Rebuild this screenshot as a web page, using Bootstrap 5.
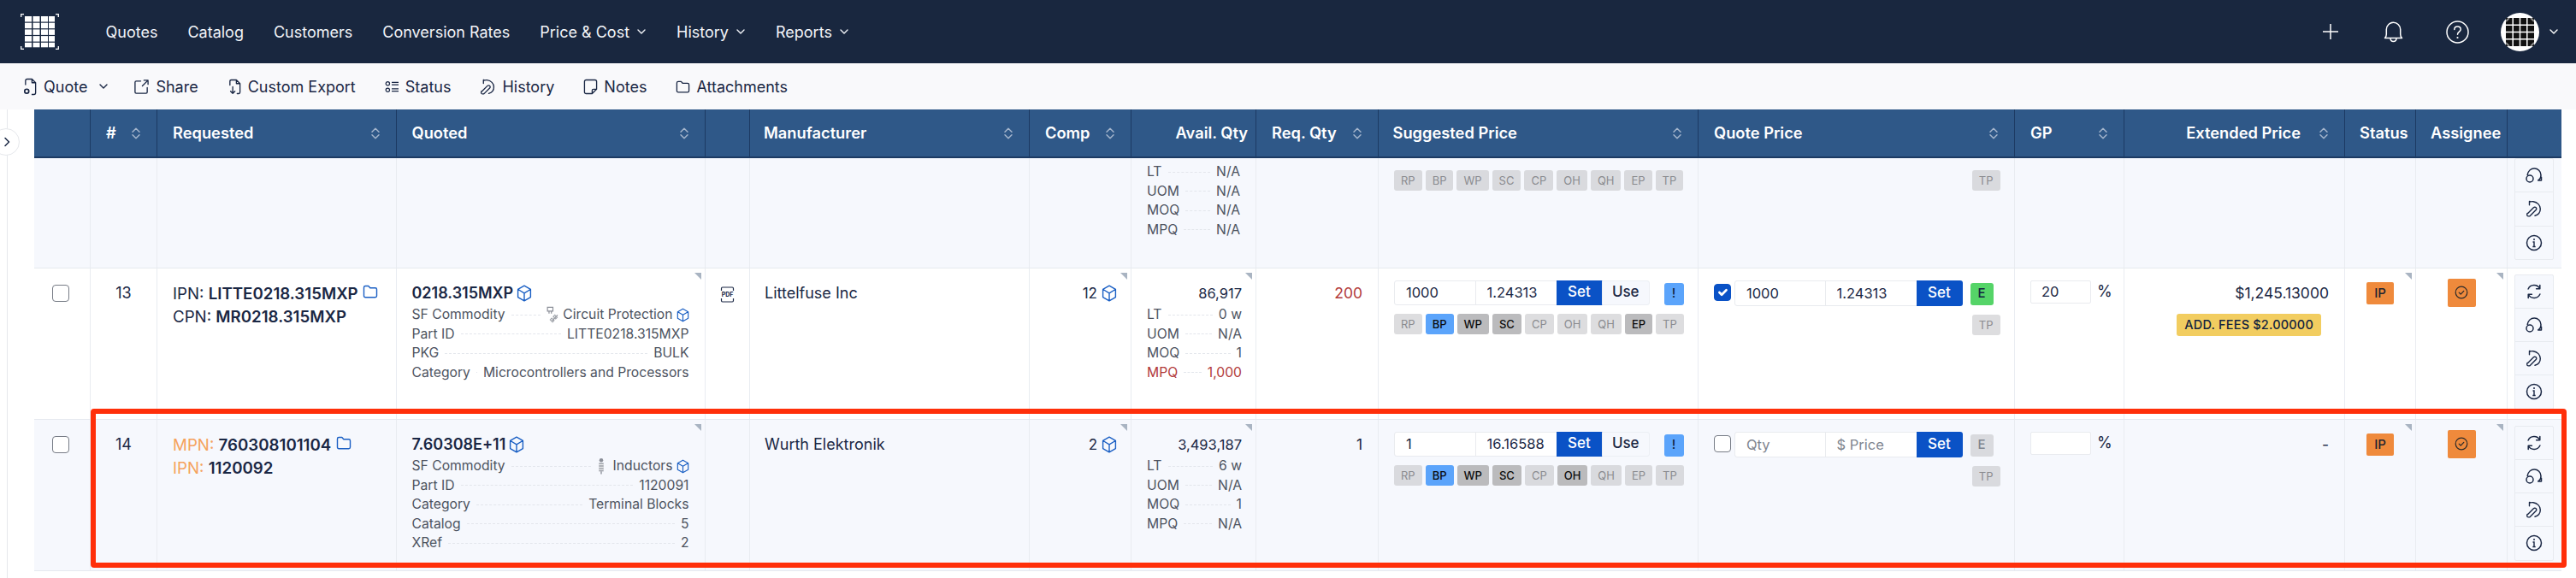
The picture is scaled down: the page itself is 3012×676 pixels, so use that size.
<!DOCTYPE html>
<html lang="en">
<head>
    <meta charset="UTF-8">
    <meta name="viewport" content="width=device-width, initial-scale=1.0">
    <title>Quote</title>

    <!-- Bootstrap CSS -->
    <link rel="stylesheet" href="https://cdn.jsdelivr.net/npm/bootstrap@5.3.0/dist/css/bootstrap.min.css">

    <style>
        body {
            font-family: Inter, "Liberation Sans", sans-serif;
            font-size: 18px;
            color: #1a2744;
            background-color: #fff;
            overflow: hidden;
        }

        /* top bar */
        .top-bar {
            height: 74px;
            background-color: #19273f;
            padding: 0;
        }
        .brand-mark { margin-left: 24px; margin-right: 37px; display: block; }
        .navbar-expand.top-bar .navbar-nav .nav-link {
            color: #f2f4f8;
            font-size: 18px;
            padding: 0 17.5px;
            display: flex;
            align-items: center;
            gap: 8px;
        }
        .top-tools { margin-right: 20px; }
        .top-tool { color: #fff; display: block; }
        .tool-plus { margin-right: 53px; }
        .tool-bell { margin-right: 50px; }
        .tool-help { margin-right: 37px; }
        .user-pic {
            width: 45px;
            height: 45px;
            border-radius: 50%;
            background-color: #fff;
            display: flex;
            align-items: center;
            justify-content: center;
            margin-right: 11px;
        }

        /* action strip */
        .action-strip {
            height: 54px;
            background-color: #f9f9fb;
            padding-left: 27px;
            gap: 34px;
        }
        .strip-item {
            display: flex;
            align-items: center;
            gap: 7px;
            color: #1a2744;
            font-size: 18px;
            text-decoration: none;
        }
        .strip-caret { margin-left: 6px; margin-right: -5px; }

        /* page body */
        .page-body { position: relative; }
        .side-rail {
            flex: 0 0 9px;
            border-right: 1px solid #e6e8ec;
            height: 548px;
        }
        .rail-toggle {
            position: absolute;
            left: -9px;
            top: 22px;
            width: 32px;
            height: 32px;
            border-radius: 50%;
            border: 1px solid #e6e8ec;
            background-color: #fff;
            display: flex;
            align-items: center;
            justify-content: flex-end;
            padding: 0 10px 0 0;
        }
        .grid-wrap { margin-left: 31px; width: 2954.5px; }

        /* quote table */
        .quote-grid {
            table-layout: fixed;
            width: 2954.5px;
            margin: 0;
            --bs-table-bg: transparent;
            --bs-table-color: #1a2744;
        }
        .quote-grid > thead > tr > th {
            height: 56px;
            padding: 0 18px;
            background-color: #2f5888;
            color: #fff;
            font-weight: 600;
            font-size: 18.3px;
            vertical-align: middle;
            border-bottom: 2px solid #1c3a63;
            border-right: 1px solid #1c3a63;
        }
        .quote-grid > thead > tr > th:last-child { border-right: 0; }
        .quote-grid > thead > tr > th.tight-end { padding-right: 9px; }
        .quote-grid > thead > tr > th.snug-cell { padding-left: 17px; padding-right: 9px; white-space: nowrap; }
        .quote-grid > thead > tr > th.sugg-head { padding-left: 16.5px; }
        .head-in {
            display: flex;
            align-items: center;
            justify-content: space-between;
            white-space: nowrap;
        }
        .head-in.ext-head { justify-content: flex-end; gap: 21px; }
        .sort-mark { color: #a4b5cc; display: block; flex: none; }

        .quote-grid > tbody > tr > td {
            position: relative;
            vertical-align: top;
            padding: 18px;
            border-bottom: 1px solid #e6e9ef;
            border-right: 1px solid #e9ecf1;
            line-height: 22.5px;
        }
        .quote-grid > tbody > tr > td:last-child { border-right: 0; }
        .tint-row > td { background-color: #f6f8fd; }
        .cut-row > td { height: 129px; }
        .full-row > td { height: 177px; }
        .quote-grid > tbody > tr.cut-row > td { padding-top: 5px; }
        .quote-grid > tbody > tr > td.btns-cell { padding: 7px 0 0; }
        .quote-grid > tbody > tr.cut-row > td.btns-cell { padding-top: 0; }
        .quote-grid > tbody > tr > td.pick-cell { padding: 19px 0 0 21px; }
        .quote-grid > tbody > tr > td.price-cell { padding: 14px 16.5px 0 18px; }
        .quote-grid > tbody > tr > td.gp-cell { padding: 14px 0 0 18px; }
        .quote-grid > tbody > tr > td.status-cell { padding: 16px 0 0; }
        .quote-grid > tbody > tr > td.owner-cell { padding: 12px 0 0; }
        .quote-grid > tbody > tr > td.pdf-cell { padding: 19px 0 0; text-align: center; }
        .quote-grid > tbody > tr > td.mfr-cell { padding-left: 17px; }

        .w-pick { width: 65.5px; }
        .w-num { width: 78px; }
        .w-req { width: 279.5px; }
        .w-quoted { width: 361px; }
        .w-pdf { width: 52.5px; }
        .w-mfr { width: 327px; }
        .w-comp { width: 119px; }
        .w-avail { width: 146px; }
        .w-reqqty { width: 143px; }
        .w-sugg { width: 374px; }
        .w-price { width: 370px; }
        .w-gp { width: 128px; }
        .w-ext { width: 258px; }
        .w-status { width: 83px; }
        .w-owner { width: 107px; }
        .w-btns { width: 63px; }

        .corner-tick {
            position: absolute;
            top: 5px;
            right: 4px;
            width: 0;
            height: 0;
            border-top: 8px solid #a9b4c2;
            border-left: 8px solid transparent;
        }

        .grid-check.form-check-input {
            width: 20px;
            height: 20px;
            margin: 0;
            border: 1px solid #777c86;
            border-radius: 4px;
        }
        .grid-check.form-check-input:checked {
            background-color: #0a52c6;
            border-color: #0a52c6;
        }
        .id-line { margin-bottom: 5px; white-space: nowrap; font-size: 18.7px; }
        .id-line b { font-weight: 600; }
        .mpn-tag { color: #f5a25d; }
        .part-head { font-weight: 600; margin-bottom: 3px; display: flex; align-items: center; gap: 4px; }
        .blue-ico { color: #1a5fc4; flex: none; }
        .spec-line {
            display: flex;
            align-items: center;
            font-size: 15.7px;
            color: #4d5360;
            white-space: nowrap;
        }
        .spec-line .leader {
            flex: 1 1 auto;
            border-bottom: 1px dashed #e3e6ec;
            margin: 0 7px;
        }
        .spec-warn { color: #b23a3a; }
        .spec-val { display: flex; align-items: center; gap: 4px; }
        .red-qty { color: #b23a3a; }
        .count-line { display: flex; justify-content: flex-end; align-items: center; gap: 5px; font-size: 17px; }
        .big-num { text-align: right; margin-bottom: 3px; font-size: 16.5px; }
        .money-line { font-size: 17.5px; }

        .price-in {
            height: 29px;
            padding: 0 13px;
            font-size: 16.5px;
            color: #1a2744;
            border: 1px solid #e9ebef;
            border-radius: 3px;
            background-color: #fff;
        }
        .price-in::placeholder { color: #80858f; }
        .input-group > .price-in.qty-sugg { flex: 0 0 95.5px; }
        .input-group > .price-in.val-sugg { flex: 0 0 96px; }
        .input-group > .price-in.qty-set { flex: 0 0 106.5px; height: 30px; }
        .input-group > .price-in.val-set { flex: 0 0 108px; height: 30px; }
        .set-go.btn {
            width: 54px;
            padding: 0;
            font-size: 17px;
            font-weight: 500;
            color: #fff;
            background-color: #0a52c6;
            border: 0;
            border-radius: 3px;
        }
        .use-go.btn {
            width: 56.5px;
            padding: 0;
            font-size: 17px;
            font-weight: 500;
            color: #1a2744;
            background-color: #f6f8fd;
            border: 1px solid #eceff4;
            border-radius: 3px;
        }
        .flag-box {
            margin-top: 3px;
            height: 26px;
            border-radius: 3px;
            display: flex;
            align-items: center;
            justify-content: center;
            font-size: 15px;
            font-weight: 500;
            flex: none;
        }
        .flag-warn { width: 23px; background-color: #5ba4fb; color: #12233f; }
        .flag-on { width: 27px; background-color: #55d468; color: #12233f; margin-left: 9px; }
        .flag-off { width: 27px; background-color: #d9dade; color: #80858f; margin-left: 9px; }

        .pill-row { display: flex; gap: 4px; margin-top: 10px; }
        .cut-row .pill-row { margin-top: 0; }
        .price-pill {
            height: 24px;
            padding: 0 8px;
            border-radius: 3px;
            font-size: 13px;
            line-height: 24px;
            background-color: #dddddf;
            color: #8a8b8f;
        }
        .tint-row .price-pill { background-color: #d9dade; }
        .price-pill.pill-on, .tint-row .price-pill.pill-on { background-color: #bbbbbd; color: #0c0c0c; font-weight: 500; }
        .price-pill.pill-blue { background-color: #5ba4fb; color: #0c0c0c; font-weight: 500; }
        .pill-end { justify-content: flex-end; }

        .gp-in {
            width: 71px;
            height: 27px;
            padding: 0 12px;
            font-size: 16.5px;
            color: #1a2744;
            border: 1px solid #e9ebef;
            border-radius: 2px;
        }
        .gp-box { display: flex; align-items: center; gap: 7px; }

        .fee-tag.badge {
            display: inline-block;
            margin: 13px 9px 0 0;
            height: 26px;
            padding: 0 9px;
            line-height: 26px;
            border-radius: 3px;
            font-size: 14.5px;
            font-weight: 500;
            letter-spacing: .2px;
            color: #12233f;
            background-color: #f2cd60;
        }
        .ip-box {
            width: 32px;
            height: 26px;
            margin: 0 auto;
            background-color: #ef8a3c;
            border-radius: 2px;
            font-size: 15px;
            font-weight: 500;
            line-height: 26px;
            text-align: center;
            color: #1f2430;
        }
        .owner-box {
            width: 33px;
            height: 33px;
            margin: 0 auto;
            background-color: #ef8a3c;
            border-radius: 2px;
            display: flex;
            align-items: center;
            justify-content: center;
            color: #2a2a2a;
        }

        .act-stack.btn-group-vertical { display: flex; width: 46px; margin: 0 auto; }
        .act-stack .btn {
            height: 40.25px;
            padding: 0;
            display: flex;
            align-items: center;
            justify-content: center;
            background-color: #f6f8fd;
            border: 1px solid #e8ebf0;
            border-radius: 2px;
            color: #1a2744;
        }

        /* the red marker over the last row */
        .row-marker {
            position: absolute;
            left: 106px;
            top: 350px;
            width: 2895px;
            height: 186px;
            border: 6px solid #ff2f0a;
            border-radius: 4px;
            pointer-events: none;
        }
    </style>
</head>
<body>
    <svg width="0" height="0" class="position-absolute">
        <defs>
            <symbol id="i-down" viewBox="0 0 12 12"><path d="M2 4l4 4 4-4" fill="none" stroke="currentColor" stroke-width="1.4" stroke-linecap="round" stroke-linejoin="round"/></symbol>
            <symbol id="i-sort" viewBox="0 0 12 14"><path d="M2 5.2l4-4 4 4M2 8.8l4 4 4-4" fill="none" stroke="currentColor" stroke-width="1.5" stroke-linecap="round" stroke-linejoin="round"/></symbol>
            <symbol id="i-cube" viewBox="0 0 18 20"><path d="M9 1.2l7.4 4.2v9.2L9 18.8l-7.4-4.2V5.4zM1.8 5.5L9 9.8l7.2-4.3M9 9.8v8.8" fill="none" stroke="currentColor" stroke-width="1.4" stroke-linejoin="round"/></symbol>
            <symbol id="i-folder" viewBox="0 0 18 18"><path d="M1.5 4.2c0-1 .7-1.7 1.7-1.7h3.6l2 2.2h6c1 0 1.7.7 1.7 1.7v7.6c0 1-.7 1.7-1.7 1.7H3.2c-1 0-1.7-.7-1.7-1.7z" fill="none" stroke="currentColor" stroke-width="1.4" stroke-linejoin="round"/></symbol>
            <symbol id="i-quote" viewBox="0 0 18 22"><path d="M3 9V3.5C3 2.400 3.800 1.500 5 1.500h6l4.500 4.500v12.500c0 1.200-.9 2-2 2h-3M11 1.500V6h4.500" fill="none" stroke="currentColor" stroke-width="1.400" stroke-linejoin="round"/><circle cx="4.500" cy="16.500" r="2.600" fill="none" stroke="currentColor" stroke-width="1.800"/></symbol>
            <symbol id="i-share" viewBox="0 0 20 20"><path d="M9 3H3.500C2.500 3 2 3.500 2 4.500v12c0 1 .5 1.500 1.500 1.500h12c1 0 1.500-.5 1.500-1.500V11M11 9l7-7M13 2h5v5" fill="none" stroke="currentColor" stroke-width="1.400" stroke-linecap="round" stroke-linejoin="round"/></symbol>
            <symbol id="i-export" viewBox="0 0 18 20"><path d="M3 8V3c0-1 .7-1.500 1.500-1.500H11L15.500 6v11c0 1-.6 1.500-1.500 1.500h-2M11 1.500V6h4.500M6.500 10v8M3.800 15.500l2.700 2.700 2.700-2.700" fill="none" stroke="currentColor" stroke-width="1.400" stroke-linecap="round" stroke-linejoin="round"/></symbol>
            <symbol id="i-status" viewBox="0 0 18 16"><circle cx="3.500" cy="4" r="2.300" fill="none" stroke="currentColor" stroke-width="1.300"/><circle cx="3.500" cy="12" r="2.300" fill="none" stroke="currentColor" stroke-width="1.300"/><path d="M8.500 2.500h8.500M8.500 5.500h8.500M8.500 10.500h8.500M8.500 13.500h8.500" stroke="currentColor" stroke-width="1.300"/></symbol>
            <symbol id="i-history" viewBox="0 0 20 20"><path d="M5 1.500h-.5v4.300M4.500 2.200C6 1.700 7.500 1.500 9 1.700c4.800.6 8.300 4.400 8.300 8.500 0 3.800-2.600 7-6.300 8M2.700 15.500l6.700-6.700c.8-.8 2-.8 2.800 0s.8 2 0 2.800l-6.700 6.700c-.8.500-2.800.7-3.500 0-.6-.7-.3-2 .0-2.800z" fill="none" stroke="currentColor" stroke-width="1.400" stroke-linecap="round" stroke-linejoin="round"/></symbol>
            <symbol id="i-note" viewBox="0 0 18 20"><path d="M11 18.500H3.500c-1.100 0-2-.9-2-2v-13c0-1.100.9-2 2-2h11c1.100 0 2 .9 2 2V13zM11 18.500V14.500c0-.9.6-1.500 1.500-1.500h4" fill="none" stroke="currentColor" stroke-width="1.400" stroke-linejoin="round"/></symbol>
            <symbol id="i-sync" viewBox="0 0 20 20"><path d="M16.600 6.500A7.500 7.500 0 0 0 3.100 7M3.400 13.500A7.500 7.500 0 0 0 16.900 13M16.800 2.500v4.200h-4.200M3.200 17.500v-4.200h4.200" fill="none" stroke="currentColor" stroke-width="1.500" stroke-linecap="round" stroke-linejoin="round"/></symbol>
            <symbol id="i-loop" viewBox="0 0 20 20"><circle cx="5" cy="14" r="4" fill="none" stroke="currentColor" stroke-width="1.500"/><path d="M2.200 9.500C3 5 6.300 2 10.200 2c4.300 0 7.800 3.400 7.800 7.700 0 2.700-1.300 4.900-3.300 6.100M18.500 12.300v3.800h-3.800" fill="none" stroke="currentColor" stroke-width="1.500" stroke-linecap="round" stroke-linejoin="round"/></symbol>
            <symbol id="i-info" viewBox="0 0 20 20"><circle cx="10" cy="10" r="8.500" fill="none" stroke="currentColor" stroke-width="1.500"/><path d="M8.500 9h1.500v5.500M8.300 14.500h3.400" fill="none" stroke="currentColor" stroke-width="1.400"/><circle cx="10" cy="6" r="1" fill="currentColor"/></symbol>
            <symbol id="i-done" viewBox="0 0 16 16"><circle cx="8" cy="8" r="6.800" fill="none" stroke="currentColor" stroke-width="1.200"/><path d="M5.200 8.200l2 2 3.600-3.800" fill="none" stroke="currentColor" stroke-width="1.200" stroke-linecap="round" stroke-linejoin="round"/></symbol>
            <symbol id="i-fuse" viewBox="0 0 16 22"><path d="M1 1.500h7v5H1zM3 6.500v3M6 6.500v3M7 19l7-7.500" fill="none" stroke="#8b8f98" stroke-width="1.300"/><path d="M6.500 15.500l3 3-2 2-3-3zM10.500 11.500l3 3-2 2-3-3z" fill="none" stroke="#a3a7ae" stroke-width="1.300"/></symbol>
            <symbol id="i-coil" viewBox="0 0 10 22"><circle cx="5" cy="3.500" r="2.500" fill="#8b8f98"/><path d="M2 7h6v11H2z" fill="#a3a7ae"/><path d="M2 9.500h6M2 12.500h6M2 15.500h6" stroke="#fff" stroke-width="1"/><path d="M5 18v3.500" stroke="#8b8f98" stroke-width="1.500"/></symbol>
        </defs>
    </svg>

    <!-- top bar -->
    <nav class="navbar navbar-expand navbar-dark top-bar">
        <div class="container-fluid p-0">
            <svg class="brand-mark" width="45" height="42" viewBox="0 0 45 42">
                <path d="M.7 4V.7H4M41 .7h3.300V4M.7 38v3.300H4M41 41.300h3.300V38" fill="none" stroke="#fff" stroke-width="1.300"/>
                <g fill="#fff">
                    <rect x="5" y="3" width="8" height="6.500"/><rect x="14.500" y="3" width="8" height="6.500"/><rect x="24" y="3" width="8" height="6.500"/><rect x="33" y="3" width="7" height="6.500"/>
                    <rect x="5" y="10.700" width="8" height="6.500"/><rect x="14.500" y="10.700" width="8" height="6.500"/><rect x="24" y="10.700" width="8" height="6.500"/><rect x="33" y="10.700" width="7" height="6.500"/>
                    <rect x="5" y="18.400" width="8" height="6.500"/><rect x="14.500" y="18.400" width="8" height="6.500"/><rect x="24" y="18.400" width="8" height="6.500"/><rect x="33" y="18.400" width="7" height="6.500"/>
                    <rect x="5" y="26.100" width="8" height="6.500"/><rect x="14.500" y="26.100" width="8" height="6.500"/><rect x="24" y="26.100" width="8" height="6.500"/><rect x="33" y="26.100" width="7" height="6.500"/>
                    <rect x="5" y="33.800" width="8" height="5.500"/><rect x="14.500" y="33.800" width="8" height="5.500"/><rect x="24" y="33.800" width="8" height="5.500"/><rect x="33" y="33.800" width="7" height="5.500"/>
                </g>
            </svg>
            <ul class="navbar-nav me-auto">
                <li class="nav-item"><a class="nav-link" href="#">Quotes</a></li>
                <li class="nav-item"><a class="nav-link" href="#">Catalog</a></li>
                <li class="nav-item"><a class="nav-link" href="#">Customers</a></li>
                <li class="nav-item"><a class="nav-link" href="#">Conversion Rates</a></li>
                <li class="nav-item"><a class="nav-link" href="#">Price &amp; Cost <svg width="12" height="12"><use href="#i-down"/></svg></a></li>
                <li class="nav-item"><a class="nav-link" href="#">History <svg width="12" height="12"><use href="#i-down"/></svg></a></li>
                <li class="nav-item"><a class="nav-link" href="#">Reports <svg width="12" height="12"><use href="#i-down"/></svg></a></li>
            </ul>
            <div class="d-flex align-items-center top-tools">
                <svg class="top-tool tool-plus" width="18" height="18" viewBox="0 0 18 18"><path d="M9 0v18M0 9h18" stroke="currentColor" stroke-width="1.500"/></svg>
                <svg class="top-tool tool-bell" width="23" height="26" viewBox="0 0 23 26"><path d="M1.500 20.500c1.300-1 1.800-2.500 1.800-4.500V10.500a8.200 8.200 0 0 1 16.400 0V16c0 2 .5 3.500 1.800 4.500zM8 20.800c0 2.200 1.500 3.700 3.500 3.700s3.500-1.500 3.500-3.700" fill="none" stroke="currentColor" stroke-width="1.500" stroke-linejoin="round"/></svg>
                <svg class="top-tool tool-help" width="27" height="27" viewBox="0 0 27 27"><circle cx="13.500" cy="13.500" r="12.500" fill="none" stroke="currentColor" stroke-width="1.500"/><path d="M9.800 10.500c0-2 1.600-3.500 3.700-3.500s3.700 1.400 3.700 3.300c0 2.800-3.700 2.900-3.700 6" fill="none" stroke="currentColor" stroke-width="1.500" stroke-linecap="round"/><circle cx="13.500" cy="20" r="1.100" fill="currentColor"/></svg>
                <div class="user-pic">
                    <svg width="33" height="33" viewBox="0 0 33 33">
                        <path d="M0 0h33v33H0z" fill="#111"/>
                        <path d="M8.200 0v33M16.500 0v33M24.800 0v33M0 8.200h33M0 16.500h33M0 24.800h33" stroke="#fff" stroke-width="1.500"/>
                        <path d="M0 4l4-4M29 0l4 4M0 29l4 4M33 29l-4 4" stroke="#8a8a8a" stroke-width="2"/>
                    </svg>
                </div>
                <svg class="top-tool" width="12" height="12"><use href="#i-down"/></svg>
            </div>
        </div>
    </nav>

    <!-- quote actions -->
    <div class="d-flex align-items-center action-strip">
        <a class="strip-item" href="#"><svg width="17" height="21"><use href="#i-quote"/></svg>Quote <svg class="strip-caret" width="12" height="12"><use href="#i-down"/></svg></a>
        <a class="strip-item" href="#"><svg width="19" height="19"><use href="#i-share"/></svg>Share</a>
        <a class="strip-item" href="#"><svg width="17" height="19"><use href="#i-export"/></svg>Custom Export</a>
        <a class="strip-item" href="#"><svg width="17" height="15"><use href="#i-status"/></svg>Status</a>
        <a class="strip-item" href="#"><svg width="19" height="19"><use href="#i-history"/></svg>History</a>
        <a class="strip-item" href="#"><svg width="17" height="19"><use href="#i-note"/></svg>Notes</a>
        <a class="strip-item" href="#"><svg width="17" height="17"><use href="#i-folder"/></svg>Attachments</a>
    </div>

    <div class="d-flex page-body">
        <div class="side-rail">
            <button class="rail-toggle" type="button" aria-label="Expand">
                <svg width="8" height="12" viewBox="0 0 8 12"><path d="M2 1.500L6.500 6 2 10.500" fill="none" stroke="#1a2744" stroke-width="1.500" stroke-linecap="round" stroke-linejoin="round"/></svg>
            </button>
        </div>

        <div class="grid-wrap">
            <table class="table quote-grid">
                <colgroup>
                    <col class="w-pick"><col class="w-num"><col class="w-req"><col class="w-quoted"><col class="w-pdf"><col class="w-mfr"><col class="w-comp"><col class="w-avail"><col class="w-reqqty"><col class="w-sugg"><col class="w-price"><col class="w-gp"><col class="w-ext"><col class="w-status"><col class="w-owner"><col class="w-btns">
                </colgroup>
                <thead>
                    <tr>
                        <th></th>
                        <th><div class="head-in">#<svg class="sort-mark" width="12" height="14"><use href="#i-sort"/></svg></div></th>
                        <th><div class="head-in">Requested<svg class="sort-mark" width="12" height="14"><use href="#i-sort"/></svg></div></th>
                        <th><div class="head-in">Quoted<svg class="sort-mark" width="12" height="14"><use href="#i-sort"/></svg></div></th>
                        <th></th>
                        <th class="ps-3"><div class="head-in">Manufacturer<svg class="sort-mark" width="12" height="14"><use href="#i-sort"/></svg></div></th>
                        <th><div class="head-in">Comp<svg class="sort-mark" width="12" height="14"><use href="#i-sort"/></svg></div></th>
                        <th class="text-end tight-end">Avail. Qty</th>
                        <th><div class="head-in">Req. Qty<svg class="sort-mark" width="12" height="14"><use href="#i-sort"/></svg></div></th>
                        <th class="sugg-head"><div class="head-in">Suggested Price<svg class="sort-mark" width="12" height="14"><use href="#i-sort"/></svg></div></th>
                        <th><div class="head-in">Quote Price<svg class="sort-mark" width="12" height="14"><use href="#i-sort"/></svg></div></th>
                        <th><div class="head-in">GP<svg class="sort-mark" width="12" height="14"><use href="#i-sort"/></svg></div></th>
                        <th><div class="head-in ext-head">Extended Price<svg class="sort-mark" width="12" height="14"><use href="#i-sort"/></svg></div></th>
                        <th class="snug-cell">Status</th>
                        <th class="snug-cell">Assignee</th>
                        <th></th>
                    </tr>
                </thead>
                <tbody>
                    <!-- row 12, scrolled mostly out of view -->
                    <tr class="tint-row cut-row">
                        <td></td><td></td><td></td><td></td><td></td><td></td><td></td>
                        <td>
                            <div class="spec-line mt-n1"><span>LT</span><span class="leader"></span><span>N/A</span></div>
                            <div class="spec-line"><span>UOM</span><span class="leader"></span><span>N/A</span></div>
                            <div class="spec-line"><span>MOQ</span><span class="leader"></span><span>N/A</span></div>
                            <div class="spec-line"><span>MPQ</span><span class="leader"></span><span>N/A</span></div>
                        </td>
                        <td></td>
                        <td class="price-cell">
                            <div class="pill-row">
                                <span class="price-pill">RP</span><span class="price-pill">BP</span><span class="price-pill">WP</span><span class="price-pill">SC</span><span class="price-pill">CP</span><span class="price-pill">OH</span><span class="price-pill">QH</span><span class="price-pill">EP</span><span class="price-pill">TP</span>
                            </div>
                        </td>
                        <td class="price-cell">
                            <div class="pill-row pill-end"><span class="price-pill">TP</span></div>
                        </td>
                        <td></td><td></td><td></td><td></td>
                        <td class="btns-cell">
                            <div class="btn-group-vertical act-stack">
                                <button class="btn" type="button"><svg width="20" height="20"><use href="#i-loop"/></svg></button>
                                <button class="btn" type="button"><svg width="20" height="20"><use href="#i-history"/></svg></button>
                                <button class="btn" type="button"><svg width="20" height="20"><use href="#i-info"/></svg></button>
                            </div>
                        </td>
                    </tr>

                    <!-- row 13 -->
                    <tr class="full-row">
                        <td class="pick-cell"><input class="form-check-input grid-check" type="checkbox"></td>
                        <td class="text-center">13</td>
                        <td>
                            <div class="id-line">IPN: <b>LITTE0218.315MXP</b> <svg class="blue-ico align-text-top" width="18" height="18"><use href="#i-folder"/></svg></div>
                            <div class="id-line">CPN: <b>MR0218.315MXP</b></div>
                        </td>
                        <td>
                            <span class="corner-tick"></span>
                            <div class="part-head">0218.315MXP <svg class="blue-ico" width="18" height="20"><use href="#i-cube"/></svg></div>
                            <div class="spec-line"><span>SF Commodity</span><span class="leader"></span><span class="spec-val"><svg width="15" height="20"><use href="#i-fuse"/></svg>Circuit Protection <svg class="blue-ico" width="15" height="17"><use href="#i-cube"/></svg></span></div>
                            <div class="spec-line"><span>Part ID</span><span class="leader"></span><span>LITTE0218.315MXP</span></div>
                            <div class="spec-line"><span>PKG</span><span class="leader"></span><span>BULK</span></div>
                            <div class="spec-line"><span>Category</span><span class="leader"></span><span>Microcontrollers and Processors</span></div>
                        </td>
                        <td class="pdf-cell">
                            <svg width="17" height="19" viewBox="0 0 17 19"><path d="M1.500 5V2.500c0-.8.500-1.500 1.300-1.500h11.400c.8 0 1.300.7 1.300 1.500V5M1.500 14v2.500c0 .8.500 1.500 1.300 1.500h11.400c.8 0 1.300-.7 1.300-1.500V14" fill="none" stroke="#1a2744" stroke-width="1.200"/><text x="8.500" y="12" text-anchor="middle" font-family="Inter, sans-serif" font-size="7" font-weight="700" fill="#1a2744">PDF</text></svg>
                        </td>
                        <td class="mfr-cell">Littelfuse Inc</td>
                        <td class="pe-3">
                            <span class="corner-tick"></span>
                            <div class="count-line">12 <svg class="blue-ico" width="18" height="20"><use href="#i-cube"/></svg></div>
                        </td>
                        <td class="pe-3">
                            <span class="corner-tick"></span>
                            <div class="big-num">86,917</div>
                            <div class="spec-line"><span>LT</span><span class="leader"></span><span>0 w</span></div>
                            <div class="spec-line"><span>UOM</span><span class="leader"></span><span>N/A</span></div>
                            <div class="spec-line"><span>MOQ</span><span class="leader"></span><span>1</span></div>
                            <div class="spec-line spec-warn"><span>MPQ</span><span class="leader"></span><span>1,000</span></div>
                        </td>
                        <td class="text-end red-qty money-line">200</td>
                        <td class="price-cell">
                            <div class="d-flex justify-content-between">
                                <div class="input-group flex-nowrap w-auto">
                                    <input class="form-control price-in qty-sugg" value="1000">
                                    <input class="form-control price-in val-sugg" value="1.24313">
                                    <button class="btn set-go" type="button">Set</button>
                                    <button class="btn use-go" type="button">Use</button>
                                </div>
                                <span class="flag-box flag-warn">!</span>
                            </div>
                            <div class="pill-row">
                                <span class="price-pill">RP</span><span class="price-pill pill-blue">BP</span><span class="price-pill pill-on">WP</span><span class="price-pill pill-on">SC</span><span class="price-pill">CP</span><span class="price-pill">OH</span><span class="price-pill">QH</span><span class="price-pill pill-on">EP</span><span class="price-pill">TP</span>
                            </div>
                        </td>
                        <td class="price-cell">
                            <div class="d-flex">
                                <input class="form-check-input grid-check mt-1 me-1" type="checkbox" checked>
                                <div class="input-group flex-nowrap w-auto">
                                    <input class="form-control price-in qty-set" value="1000">
                                    <input class="form-control price-in val-set" value="1.24313">
                                    <button class="btn set-go" type="button">Set</button>
                                </div>
                                <span class="flag-box flag-on">E</span>
                            </div>
                            <div class="pill-row pill-end"><span class="price-pill">TP</span></div>
                        </td>
                        <td class="gp-cell"><div class="gp-box"><input class="form-control gp-in" value="20"><span>%</span></div></td>
                        <td class="text-end">
                            <div class="money-line">$1,245.13000</div>
                            <span class="badge fee-tag">ADD. FEES $2.00000</span>
                        </td>
                        <td class="status-cell"><span class="corner-tick"></span><div class="ip-box">IP</div></td>
                        <td class="owner-cell"><span class="corner-tick"></span><div class="owner-box"><svg width="16" height="16"><use href="#i-done"/></svg></div></td>
                        <td class="btns-cell">
                            <div class="btn-group-vertical act-stack">
                                <button class="btn" type="button"><svg width="20" height="20"><use href="#i-sync"/></svg></button>
                                <button class="btn" type="button"><svg width="20" height="20"><use href="#i-loop"/></svg></button>
                                <button class="btn" type="button"><svg width="20" height="20"><use href="#i-history"/></svg></button>
                                <button class="btn" type="button"><svg width="20" height="20"><use href="#i-info"/></svg></button>
                            </div>
                        </td>
                    </tr>

                    <!-- row 14 -->
                    <tr class="tint-row full-row">
                        <td class="pick-cell"><input class="form-check-input grid-check" type="checkbox"></td>
                        <td class="text-center">14</td>
                        <td>
                            <div class="id-line"><span class="mpn-tag">MPN:</span> <b>760308101104</b> <svg class="blue-ico align-text-top" width="18" height="18"><use href="#i-folder"/></svg></div>
                            <div class="id-line"><span class="mpn-tag">IPN:</span> <b>1120092</b></div>
                        </td>
                        <td>
                            <span class="corner-tick"></span>
                            <div class="part-head">7.60308E+11 <svg class="blue-ico" width="18" height="20"><use href="#i-cube"/></svg></div>
                            <div class="spec-line"><span>SF Commodity</span><span class="leader"></span><span class="spec-val"><svg width="10" height="20"><use href="#i-coil"/></svg>&nbsp;Inductors <svg class="blue-ico" width="15" height="17"><use href="#i-cube"/></svg></span></div>
                            <div class="spec-line"><span>Part ID</span><span class="leader"></span><span>1120091</span></div>
                            <div class="spec-line"><span>Category</span><span class="leader"></span><span>Terminal Blocks</span></div>
                            <div class="spec-line"><span>Catalog</span><span class="leader"></span><span>5</span></div>
                            <div class="spec-line"><span>XRef</span><span class="leader"></span><span>2</span></div>
                        </td>
                        <td></td>
                        <td class="mfr-cell">Wurth Elektronik</td>
                        <td class="pe-3">
                            <span class="corner-tick"></span>
                            <div class="count-line">2 <svg class="blue-ico" width="18" height="20"><use href="#i-cube"/></svg></div>
                        </td>
                        <td class="pe-3">
                            <span class="corner-tick"></span>
                            <div class="big-num">3,493,187</div>
                            <div class="spec-line"><span>LT</span><span class="leader"></span><span>6 w</span></div>
                            <div class="spec-line"><span>UOM</span><span class="leader"></span><span>N/A</span></div>
                            <div class="spec-line"><span>MOQ</span><span class="leader"></span><span>1</span></div>
                            <div class="spec-line"><span>MPQ</span><span class="leader"></span><span>N/A</span></div>
                        </td>
                        <td class="text-end money-line">1</td>
                        <td class="price-cell">
                            <div class="d-flex justify-content-between">
                                <div class="input-group flex-nowrap w-auto">
                                    <input class="form-control price-in qty-sugg" value="1">
                                    <input class="form-control price-in val-sugg" value="16.16588">
                                    <button class="btn set-go" type="button">Set</button>
                                    <button class="btn use-go" type="button">Use</button>
                                </div>
                                <span class="flag-box flag-warn">!</span>
                            </div>
                            <div class="pill-row">
                                <span class="price-pill">RP</span><span class="price-pill pill-blue">BP</span><span class="price-pill pill-on">WP</span><span class="price-pill pill-on">SC</span><span class="price-pill">CP</span><span class="price-pill pill-on">OH</span><span class="price-pill">QH</span><span class="price-pill">EP</span><span class="price-pill">TP</span>
                            </div>
                        </td>
                        <td class="price-cell">
                            <div class="d-flex">
                                <input class="form-check-input grid-check mt-1 me-1" type="checkbox">
                                <div class="input-group flex-nowrap w-auto">
                                    <input class="form-control price-in qty-set" placeholder="Qty">
                                    <input class="form-control price-in val-set" placeholder="$ Price">
                                    <button class="btn set-go" type="button">Set</button>
                                </div>
                                <span class="flag-box flag-off">E</span>
                            </div>
                            <div class="pill-row pill-end"><span class="price-pill">TP</span></div>
                        </td>
                        <td class="gp-cell"><div class="gp-box"><input class="form-control gp-in"><span>%</span></div></td>
                        <td class="text-end money-line">-</td>
                        <td class="status-cell"><span class="corner-tick"></span><div class="ip-box">IP</div></td>
                        <td class="owner-cell"><span class="corner-tick"></span><div class="owner-box"><svg width="16" height="16"><use href="#i-done"/></svg></div></td>
                        <td class="btns-cell">
                            <div class="btn-group-vertical act-stack">
                                <button class="btn" type="button"><svg width="20" height="20"><use href="#i-sync"/></svg></button>
                                <button class="btn" type="button"><svg width="20" height="20"><use href="#i-loop"/></svg></button>
                                <button class="btn" type="button"><svg width="20" height="20"><use href="#i-history"/></svg></button>
                                <button class="btn" type="button"><svg width="20" height="20"><use href="#i-info"/></svg></button>
                            </div>
                        </td>
                    </tr>
                </tbody>
            </table>
        </div>

        <div class="row-marker"></div>
    </div>

    <!-- Bootstrap JS -->
    <script src="https://cdn.jsdelivr.net/npm/bootstrap@5.3.0/dist/js/bootstrap.bundle.min.js"></script>
</body>
</html>
